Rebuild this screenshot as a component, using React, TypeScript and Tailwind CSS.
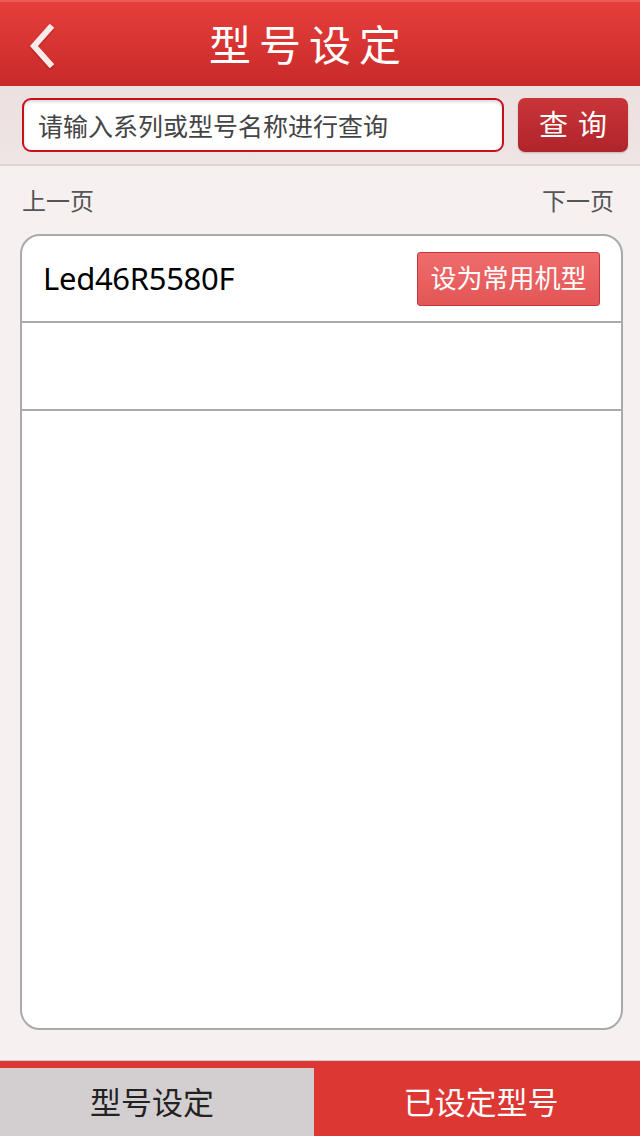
const font = "font-['Noto_Sans','Noto_Sans_CJK_SC',sans-serif]";

function BackIcon() {
  return (
    <svg width="30" height="44" viewBox="0 0 30 44" className="drop-shadow-[0_1px_1px_rgba(120,0,0,0.4)]">
      <path d="M24 4 L8 22 L24 40" fill="none" stroke="#fbeaea" strokeWidth="6" strokeLinecap="square" />
    </svg>
  );
}

export default function App() {
  return (
    <div className={`${font} flex h-[1136px] w-[640px] flex-col overflow-hidden bg-[#f6f0f0]`}>
      <header className="relative flex h-[86px] shrink-0 items-center justify-center border-t-2 border-[#ec5b55] bg-gradient-to-b from-[#e63f3b] to-[#c8292a]">
        <div className="absolute left-[26px] top-[22px]">
          <BackIcon />
        </div>
        <h1 className="ml-[-22px] text-[42px] font-normal tracking-[8px] text-white">型号设定</h1>
      </header>

      <div className="flex h-[80px] shrink-0 items-center gap-[14px] border-b-2 border-[#e2d2d2] bg-gradient-to-b from-[#ede0e0] to-[#eee5e5] pl-[22px] pr-[12px]">
        <div className="flex h-[54px] w-[482px] shrink-0 items-center rounded-[9px] border-2 border-[#c8101a] bg-white px-[14px] pt-[4px] shadow-[inset_0_2px_3px_rgba(0,0,0,0.15)]">
          <span className="text-[25px] text-[#444]">请输入系列或型号名称进行查询</span>
        </div>
        <button className="flex h-[54px] w-[110px] shrink-0 items-center justify-center rounded-[7px] bg-gradient-to-b from-[#c93539] to-[#b0242a] text-[29px] tracking-[10px] text-white shadow-[0_1px_2px_rgba(0,0,0,0.2)]">
          <span className="ml-[10px]">查询</span>
        </button>
      </div>

      <div className="flex flex-1 flex-col pl-[20px] pr-[17px]">
        <div className="flex h-[68px] items-center justify-between px-[2px] pt-[2px] text-[24px] text-[#555]">
          <span>上一页</span>
          <span className="mr-[7px]">下一页</span>
        </div>
        <div className="mb-[30px] flex-1 overflow-hidden rounded-[20px] border-2 border-[#aaa] bg-white">
          <div className="flex h-[87px] items-center justify-between border-b-2 border-[#aaa] pl-[21px] pr-[21px]">
            <span className="text-[31px] tracking-[-0.3px] text-black">Led46R5580F</span>
            <button className="flex h-[54px] w-[183px] items-center justify-center rounded-[3px] border border-[#c9343a] bg-gradient-to-b from-[#f06c6c] to-[#e25656] text-[26px] text-white">
              设为常用机型
            </button>
          </div>
          <div className="h-[88px] border-b-2 border-[#aaa]" />
        </div>
      </div>

      <nav className="flex h-[76px] shrink-0 border-t border-[#ccc] bg-[#dd3734]">
        <div className="mt-[7px] flex w-[314px] items-center justify-center bg-[#d3cfd0] pr-[10px] text-[31px] text-[#222]">
          型号设定
        </div>
        <div className="mt-[7px] flex flex-1 items-center justify-center pl-[8px] text-[31px] text-white">
          已设定型号
        </div>
      </nav>
    </div>
  );
}
